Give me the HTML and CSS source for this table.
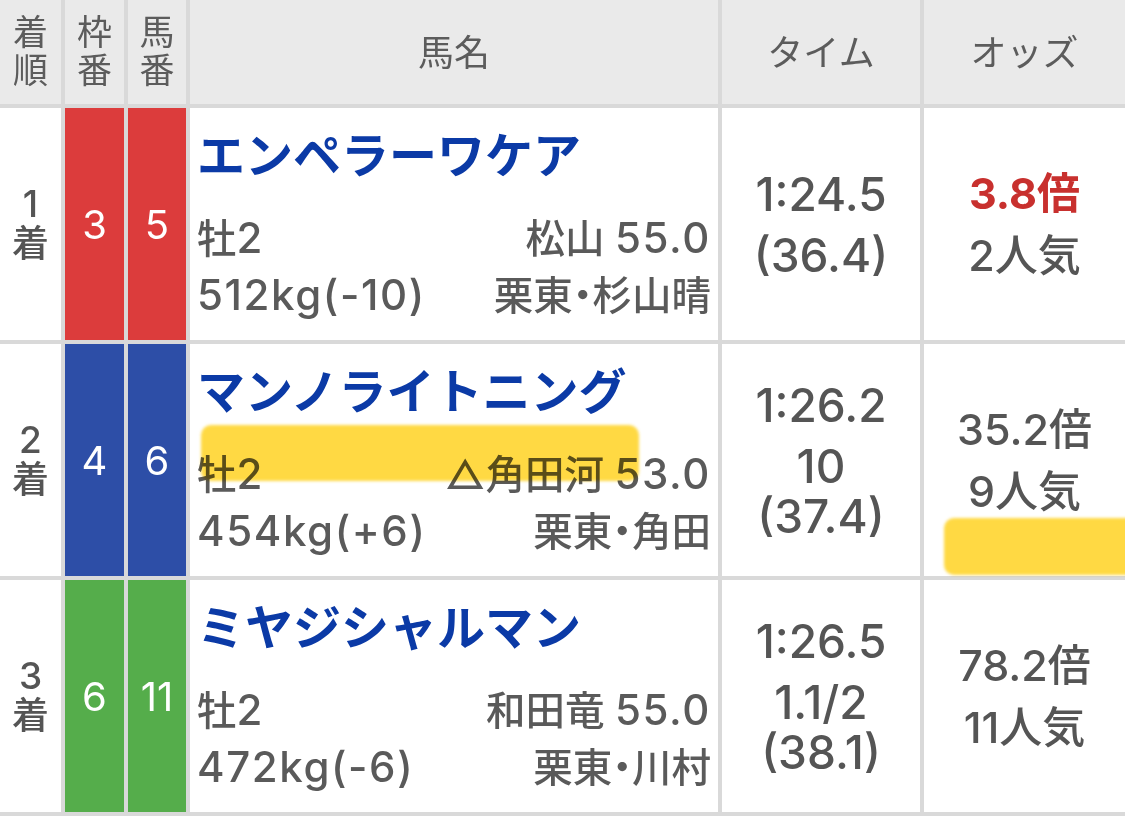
FILE: index.html
```html
<!DOCTYPE html>
<html lang="ja">
<head>
<meta charset="utf-8">
<title>レース結果</title>
<link rel="stylesheet" href="styles.css">
</head>
<body>
<table class="result">
  <colgroup>
    <col class="c-rank"><col class="c-waku"><col class="c-uma"><col class="c-name"><col class="c-time"><col class="c-odds">
  </colgroup>
  <thead>
    <tr>
      <th class="h-stack"><span class="stack">着</span><span class="stack">順</span></th>
      <th class="h-stack"><span class="stack">枠</span><span class="stack">番</span></th>
      <th class="h-stack"><span class="stack">馬</span><span class="stack">番</span></th>
      <th>馬名</th>
      <th>タイム</th>
      <th>オッズ</th>
    </tr>
  </thead>
  <tbody>
    <tr>
      <td class="rank">1<br>着</td>
      <td class="waku w-red">3</td>
      <td class="waku w-red">5</td>
      <td class="horse">
        <div class="hname">エンペラーワケア</div>
        <div class="line first"><span>牡<span class="num">2</span></span><span>松山 <span class="num">55.0</span></span></div>
        <div class="line"><span class="num">512kg(-10)</span><span>栗東・杉山晴</span></div>
      </td>
      <td class="time"><div class="t-main">1:24.5</div><div class="t-sub">(36.4)</div></td>
      <td class="odds"><div class="o-main fav">3.8倍</div><div class="o-sub">2人気</div></td>
    </tr>
    <tr>
      <td class="rank">2<br>着</td>
      <td class="waku w-blue">4</td>
      <td class="waku w-blue">6</td>
      <td class="horse">
        <div class="hname">マンノライトニング</div>
        <div class="line first"><span>牡<span class="num">2</span></span><span>△角田河 <span class="num">53.0</span></span></div>
        <div class="line"><span class="num">454kg(+6)</span><span>栗東・角田</span></div>
      </td>
      <td class="time"><div class="t-main">1:26.2</div><div class="t-sub">10</div><div class="t-sub">(37.4)</div></td>
      <td class="odds"><div class="o-main">35.2倍</div><div class="o-sub">9人気</div></td>
    </tr>
    <tr>
      <td class="rank">3<br>着</td>
      <td class="waku w-green">6</td>
      <td class="waku w-green">11</td>
      <td class="horse">
        <div class="hname">ミヤジシャルマン</div>
        <div class="line first"><span>牡<span class="num">2</span></span><span>和田竜 <span class="num">55.0</span></span></div>
        <div class="line"><span class="num">472kg(-6)</span><span>栗東・川村</span></div>
      </td>
      <td class="time"><div class="t-main">1:26.5</div><div class="t-sub">1.1/2</div><div class="t-sub">(38.1)</div></td>
      <td class="odds"><div class="o-main">78.2倍</div><div class="o-sub">11人気</div></td>
    </tr>
  </tbody>
</table>
<div class="marker marker-name"></div>
<div class="marker marker-odds"></div>
</body>
</html>
```

FILE: styles.css
```css
html, body {
  margin: 0;
  padding: 0;
  background: #ffffff;
  overflow: hidden;
  width: 1125px;
  height: 821px;
}

body {
  position: relative;
  font-family: "Inter", "Noto Sans CJK JP", sans-serif;
  color: #555555;
}

.result {
  border-collapse: separate;
  border-spacing: 4px;
  background: #d9d9d9;
  margin: -4px 0 0 -4px;
  table-layout: fixed;
  width: 1133px;
}

.c-rank { width: 61px; }
.c-waku { width: 59px; }
.c-uma { width: 58px; }
.c-name { width: 528px; }
.c-time { width: 198px; }
.c-odds { width: 201px; }

.result th {
  height: 104px;
  padding: 0 0 4px 0;
  background: #eaeaea;
  color: #5c5c5c;
  font-family: "Noto Sans CJK JP", sans-serif;
  font-weight: 400;
  font-size: 36px;
  line-height: 40px;
  text-align: center;
  vertical-align: middle;
  box-sizing: border-box;
}

.result th.h-stack {
  padding: 0 0 6px 0;
}

.stack {
  display: block;
  font-size: 35px;
  line-height: 38px;
}

.result td {
  height: 232px;
  padding: 0;
  background: #ffffff;
  box-sizing: border-box;
  vertical-align: middle;
  text-align: center;
}

.result td.rank {
  font-size: 37px;
  line-height: 40px;
  font-weight: 500;
  color: #555555;
}

.result td.waku {
  color: #ffffff;
  font-size: 40px;
  font-weight: 400;
}

.w-red { background: #dc3c3c !important; }
.w-blue { background: #2d4ea7 !important; }
.w-green { background: #55ad4b !important; }

.result td.horse {
  vertical-align: top;
  text-align: left;
  padding: 16px 7px 0 7px;
}

.hname {
  font-family: "Noto Sans CJK JP", sans-serif;
  font-weight: 700;
  font-size: 48px;
  line-height: 56px;
  color: #0b3aa6;
  white-space: nowrap;
}

.line {
  display: flex;
  justify-content: space-between;
  align-items: baseline;
  font-size: 39.5px;
  line-height: 55px;
  font-weight: 500;
  color: #5a5a5a;
  white-space: nowrap;
  font-feature-settings: "palt";
}

.num {
  font-size: 42px;
  letter-spacing: 1.6px;
}

.line.first {
  margin-top: 30px;
}

.time {
  color: #555555;
  font-size: 46px;
  font-weight: 500;
}

.t-main {
  line-height: 52px;
  margin-bottom: 10px;
}

.t-sub {
  line-height: 50px;
}

.odds {
  color: #555555;
  font-size: 43px;
  font-weight: 500;
}

.o-main {
  line-height: 50px;
  margin-bottom: 12px;
}

.o-main.fav {
  color: #c8302e;
  font-weight: 700;
}

.o-sub {
  line-height: 50px;
}

.marker {
  position: absolute;
  background: #ffd633;
  mix-blend-mode: multiply;
  border-radius: 10px;
  filter: blur(1.5px);
  opacity: 0.92;
}

.marker-name {
  left: 201px;
  top: 425px;
  width: 438px;
  height: 56px;
}

.marker-odds {
  left: 944px;
  top: 518px;
  width: 200px;
  height: 57px;
}
```
